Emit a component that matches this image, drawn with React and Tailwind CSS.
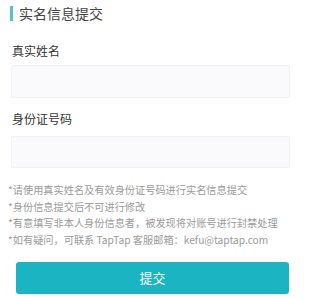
export default function App() {
  const notes = [
    '*请使用真实姓名及有效身份证号码进行实名信息提交',
    '*身份信息提交后不可进行修改',
    '*有意填写非本人身份信息者，被发现将对账号进行封禁处理',
    '*如有疑问，可联系 TapTap 客服邮箱：kefu@taptap.com',
  ];

  return (
    <div
      className="w-[295px] h-[299px] bg-white overflow-hidden"
      style={{ fontFamily: '"Noto Sans CJK SC", "Noto Sans", sans-serif' }}
    >
      {/* title */}
      <div className="h-[37px] pt-[5px] pl-[10px] flex items-start gap-[6px]">
        <span className="mt-[1px] w-[3px] h-[15px] bg-[#56c2cb]" />
        <h1 className="text-[14px] leading-[16px] text-[#444]">实名信息提交</h1>
      </div>

      <form className="flex flex-col">
        <label className="h-[28px] flex items-center pl-[12px] text-[12px] text-[#333]">真实姓名</label>
        <input className="ml-[11px] w-[279px] h-[33px] bg-[#fafafc] border border-[#f2f2f5] rounded-[2px] outline-none" />

        <label className="h-[38px] pt-[4px] flex items-center pl-[12px] text-[12px] text-[#333]">身份证号码</label>
        <input className="ml-[11px] w-[279px] h-[32px] bg-[#fafafc] border border-[#f2f2f5] rounded-[2px] outline-none" />

        <ul className="mt-[14px] pl-[8px] text-[10.2px] leading-[16.5px] text-[#9a9a9a]">
          {notes.map((n) => (
            <li key={n} className="whitespace-nowrap">{n}</li>
          ))}
        </ul>

        <button
          type="button"
          className="mt-[14px] ml-[16px] w-[273px] h-[32px] rounded-[3px] bg-[#1bb4c3] text-white text-[13px]"
        >
          提交
        </button>
      </form>
    </div>
  );
}
